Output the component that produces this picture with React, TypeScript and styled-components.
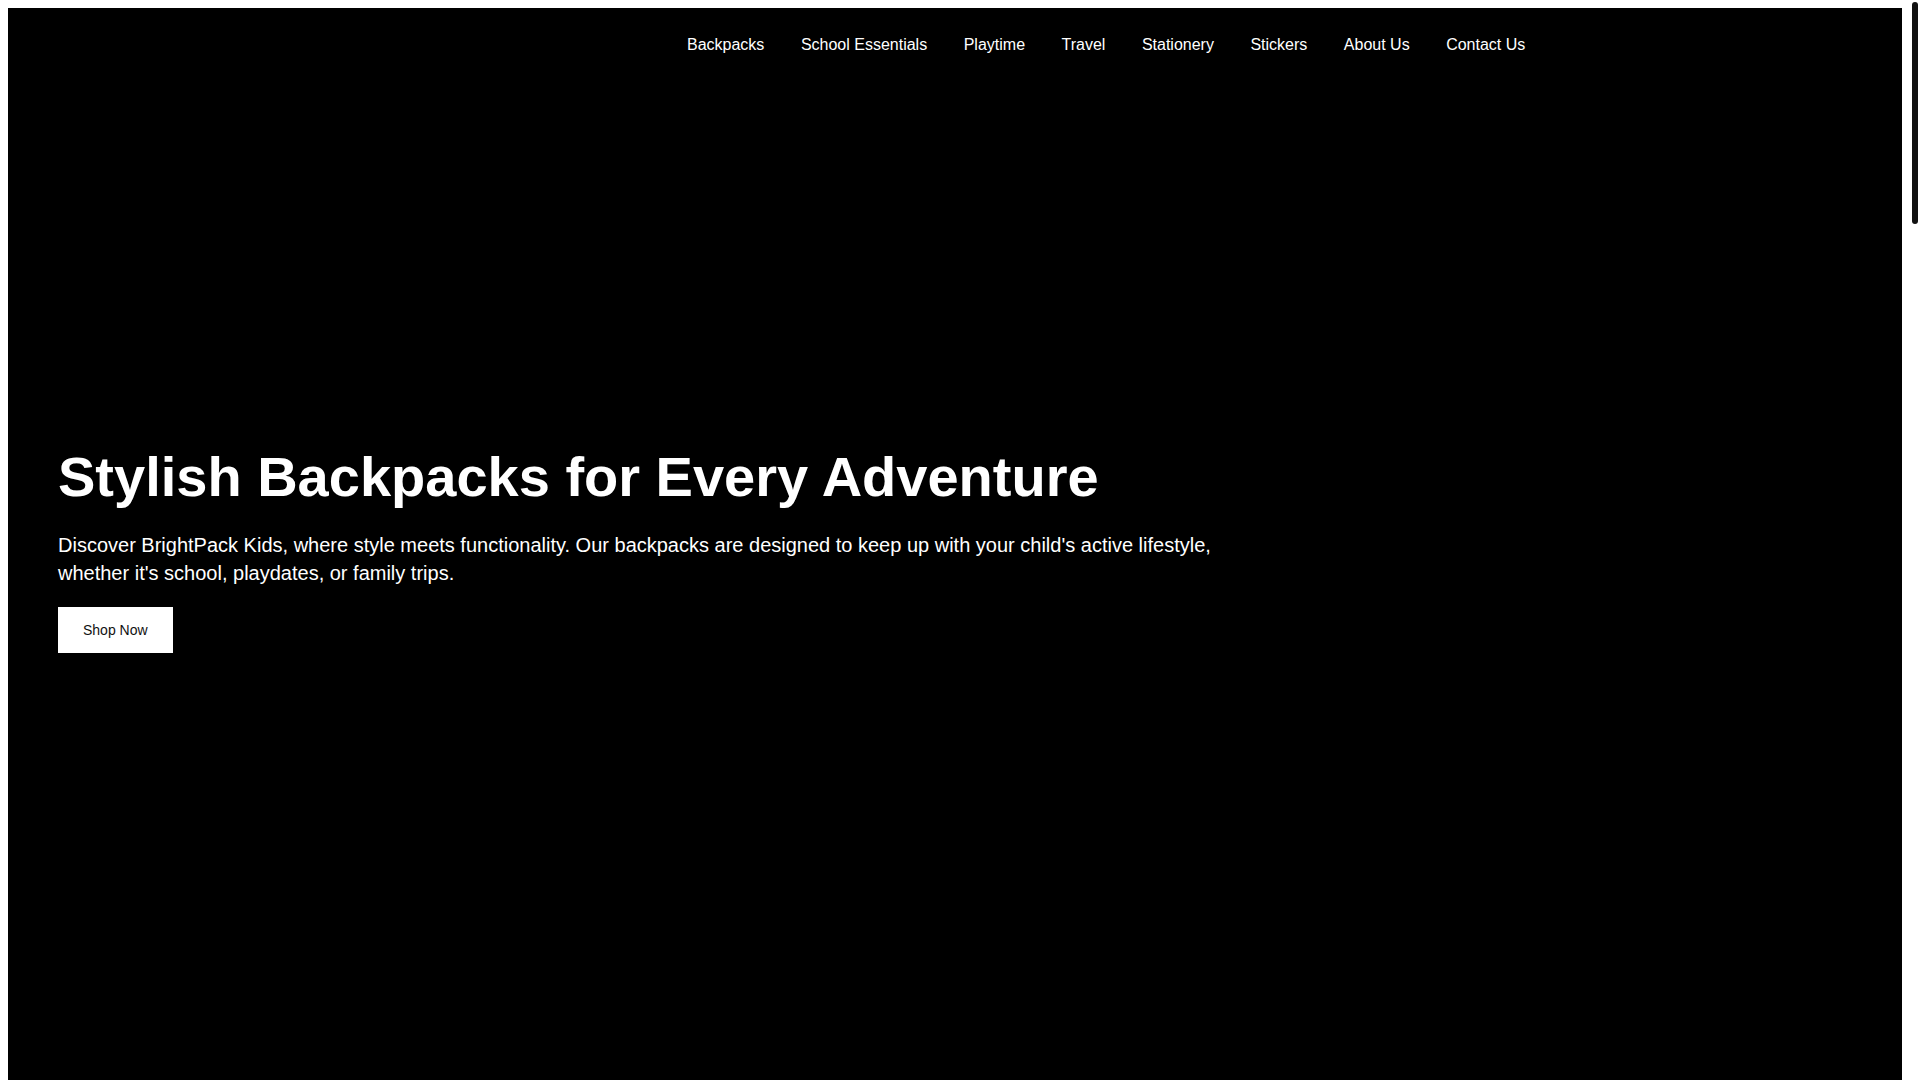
import React, { useEffect, useState } from "react";
import styled, { createGlobalStyle } from "styled-components";

const GlobalStyle = createGlobalStyle`
  html {
    background: #ffffff;
  }
  body {
    margin: 8px 18px 8px 8px;
    font-family: "Liberation Sans", Arial, Helvetica, sans-serif;
    color: #111111;
    background: #ffffff;
  }
`;

const ScrollTrack = styled.div`
  position: fixed;
  top: 0;
  right: 0;
  width: 10px;
  height: 100vh;
  background: #ffffff;
  z-index: 10;
`;

const ScrollThumb = styled.div`
  position: absolute;
  top: 2px;
  left: 2px;
  width: 6px;
  border-radius: 3px;
  background: #111111;
`;

const Hero = styled.section`
  position: relative;
  background: #000000;
  min-height: 100vh;
  display: flex;
  flex-direction: column;
  justify-content: center;
  padding: 0 50px;
  box-sizing: border-box;
`;

const Header = styled.header`
  position: absolute;
  top: 0;
  left: 0;
  right: 0;
  display: flex;
  padding: 28px 50px 0;
`;

const Nav = styled.nav`
  display: flex;
  gap: 36.5px;
  margin-left: 629px;
`;

const NavLink = styled.a`
  color: #ffffff;
  font-size: 16px;
  line-height: 18px;
  text-decoration: none;
  white-space: nowrap;
`;

const HeroContent = styled.div`
  display: flex;
  flex-direction: column;
  align-items: flex-start;
`;

const Title = styled.h1`
  margin: 0 0 20px;
  font-size: 56px;
  line-height: 1.2;
  font-weight: 700;
  color: #ffffff;
`;

const Lead = styled.p`
  margin: 0 0 20px;
  max-width: 1200px;
  font-size: 20px;
  line-height: 28px;
  color: #ffffff;
`;

const ShopButton = styled.a`
  display: inline-block;
  background: #ffffff;
  color: #111111;
  font-size: 14px;
  line-height: 16px;
  padding: 15px 25px;
  text-decoration: none;
`;

const Section = styled.section`
  min-height: 1016px;
  box-sizing: border-box;
  padding: 80px 50px;
  background: #ffffff;
`;

const SectionTitle = styled.h2`
  margin: 0 0 32px;
  font-size: 36px;
  color: #111111;
`;

const CardGrid = styled.div`
  display: grid;
  grid-template-columns: repeat(3, 1fr);
  gap: 32px;
`;

const Card = styled.div`
  border: 1px solid #e5e5e5;
  padding: 24px;
  min-height: 240px;
`;

const CardTitle = styled.h3`
  margin: 0 0 12px;
  font-size: 20px;
`;

const CardText = styled.p`
  margin: 0;
  font-size: 16px;
  line-height: 1.5;
  color: #444444;
`;

const navItems = [
  "Backpacks",
  "School Essentials",
  "Playtime",
  "Travel",
  "Stationery",
  "Stickers",
  "About Us",
  "Contact Us",
];

const sections = [
  {
    title: "Backpacks",
    cards: [
      ["Adventure Pack", "Durable and roomy for every trip."],
      ["School Star", "Lightweight with padded straps."],
      ["Mini Explorer", "Perfect size for little ones."],
    ],
  },
  {
    title: "School Essentials",
    cards: [
      ["Lunch Boxes", "Keep meals fresh all day."],
      ["Pencil Cases", "Organize every crayon and pen."],
      ["Water Bottles", "Leak-proof and easy to carry."],
    ],
  },
  {
    title: "About Us",
    cards: [
      ["Our Story", "BrightPack Kids began with one colorful idea."],
      ["Our Mission", "Style that keeps up with active kids."],
      ["Our Promise", "Quality gear built to last."],
    ],
  },
  {
    title: "Contact Us",
    cards: [
      ["Email", "hello@brightpackkids.com"],
      ["Phone", "(555) 123-4567"],
      ["Visit", "123 Adventure Lane"],
    ],
  },
];

function ScrollIndicator() {
  const [thumb, setThumb] = useState({ height: 222, top: 2 });

  useEffect(() => {
    const update = () => {
      const doc = document.documentElement;
      const view = window.innerHeight;
      const total = Math.max(doc.scrollHeight, view);
      const len = Math.max(20, (view * view) / total - 4);
      const maxTop = view - len - 4;
      const ratio = total > view ? window.scrollY / (total - view) : 0;
      setThumb({ height: len, top: 2 + ratio * maxTop });
    };
    update();
    window.addEventListener("scroll", update);
    window.addEventListener("resize", update);
    return () => {
      window.removeEventListener("scroll", update);
      window.removeEventListener("resize", update);
    };
  }, []);

  return (
    <ScrollTrack>
      <ScrollThumb style={{ height: thumb.height, top: thumb.top }} />
    </ScrollTrack>
  );
}

export default function App() {
  return (
    <>
      <GlobalStyle />
      <Hero>
        <Header>
          <Nav>
            {navItems.map((item) => (
              <NavLink key={item} href="#">
                {item}
              </NavLink>
            ))}
          </Nav>
        </Header>
        <HeroContent>
          <Title>Stylish Backpacks for Every Adventure</Title>
          <Lead>
            Discover BrightPack Kids, where style meets functionality. Our backpacks are
            designed to keep up with your child's active lifestyle, whether it's school,
            playdates, or family trips.
          </Lead>
          <ShopButton href="#">Shop Now</ShopButton>
        </HeroContent>
      </Hero>
      {sections.map((s) => (
        <Section key={s.title}>
          <SectionTitle>{s.title}</SectionTitle>
          <CardGrid>
            {s.cards.map(([t, d]) => (
              <Card key={t}>
                <CardTitle>{t}</CardTitle>
                <CardText>{d}</CardText>
              </Card>
            ))}
          </CardGrid>
        </Section>
      ))}
      <ScrollIndicator />
    </>
  );
}
